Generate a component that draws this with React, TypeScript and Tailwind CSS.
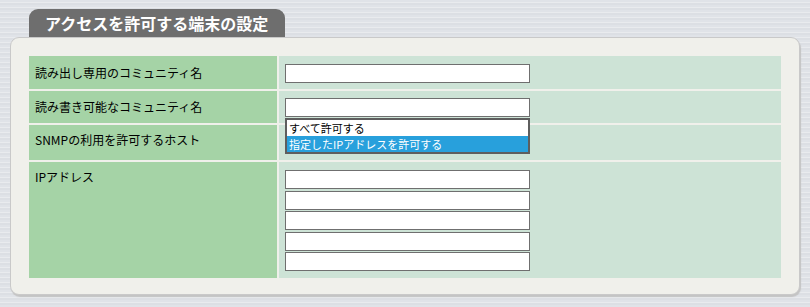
import React from 'react'

const font = { fontFamily: '"Noto Sans CJK JP", "Noto Sans", sans-serif' }

function Field() {
  return <div className="h-[19px] w-[245px] border border-[#6f6f6f] bg-white" />
}

export default function App() {
  return (
    <div
      className="h-[307px] w-[810px] overflow-hidden bg-[#e3e6ea] bg-[repeating-linear-gradient(180deg,#e0e3e8_0px,#e0e3e8_2px,#e9ebee_2px,#e9ebee_3px,#dcdfe4_3px,#dcdfe4_5px)] pt-[9px] text-[12px] text-black"
      style={font}
    >
      <div className="ml-[29px] flex h-[28px] w-[256px] items-center rounded-t-[9px] bg-[#6e6e6e] pl-[16px] text-[16px] font-bold text-white">
        アクセスを許可する端末の設定
      </div>
      <div className="ml-[10px] h-[258px] w-[790px] rounded-[9px] border border-[#c9c9c9] bg-[#f0f0eb] px-[18px] pt-[18px] shadow-[1px_2px_1px_#c4c4c4]">
        <div className="flex flex-col gap-[2px]">
          <div className="flex h-[33px] gap-[2px]">
            <div className="flex w-[248px] items-center bg-[#a5d3a6] pl-[6px]">読み出し専用のコミュニティ名</div>
            <div className="flex flex-1 items-start bg-[#cde3d6] pl-[6px] pt-[8px]">
              <Field />
            </div>
          </div>
          <div className="flex h-[32px] gap-[2px]">
            <div className="flex w-[248px] items-center bg-[#a5d3a6] pl-[6px]">読み書き可能なコミュニティ名</div>
            <div className="relative flex flex-1 items-start bg-[#cde3d6] pl-[6px] pt-[7px]">
              <Field />
              <div className="absolute left-[6px] top-[27px] z-10 w-[245px] border-2 border-[#5e5e5e] bg-white text-[11px] leading-[16px]">
                <div className="pl-[2px]">すべて許可する</div>
                <div className="bg-[#28a0dc] pl-[2px] text-white">指定したIPアドレスを許可する</div>
              </div>
            </div>
          </div>
          <div className="flex h-[35px] gap-[2px]">
            <div className="flex w-[248px] items-center bg-[#a5d3a6] pb-[5px] pl-[6px]">SNMPの利用を許可するホスト</div>
            <div className="flex-1 bg-[#cde3d6]" />
          </div>
          <div className="flex h-[116px] gap-[2px]">
            <div className="w-[248px] bg-[#a5d3a6] pl-[6px] pt-[6px]">IPアドレス</div>
            <div className="flex flex-1 flex-col gap-[1.5px] bg-[#cde3d6] pl-[6px] pt-[8px]">
              <Field />
              <Field />
              <Field />
              <Field />
              <Field />
            </div>
          </div>
        </div>
      </div>
    </div>
  )
}
